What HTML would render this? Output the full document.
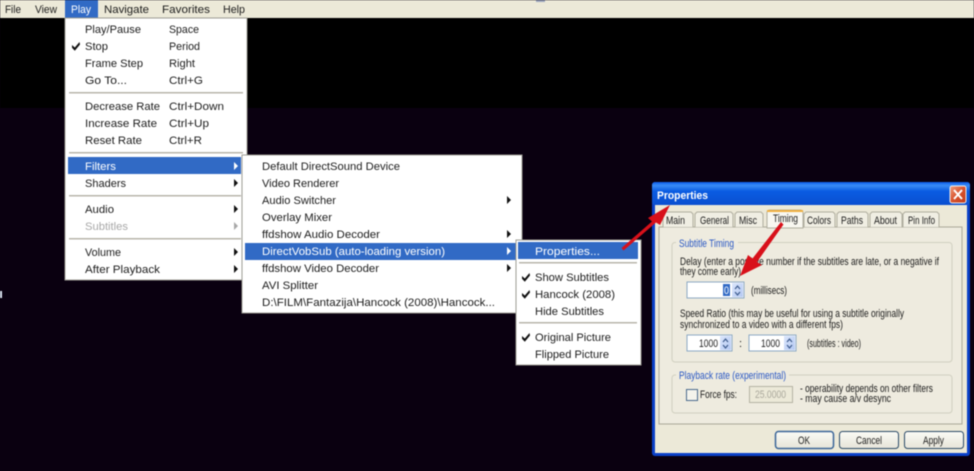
<!DOCTYPE html>
<html><head><meta charset="utf-8"><style>
html,body{margin:0;padding:0;background:#0a0010;width:974px;height:471px;overflow:hidden}
svg{display:block;filter:blur(.45px)}
text{font-family:"Liberation Sans",sans-serif;font-size:11px;fill:#1c1c1c;}
.w{fill:#fff}.g{fill:#a8a8a8}.b{fill:#2a58c4}
</style></head><body>
<svg width="974" height="471" viewBox="0 0 974 471" xmlns="http://www.w3.org/2000/svg">
<defs>
<linearGradient id="tb" x1="0" y1="0" x2="0" y2="1"><stop offset="0" stop-color="#0a5ae8"/><stop offset=".15" stop-color="#3a8cf6"/><stop offset=".4" stop-color="#0a5ce2"/><stop offset="1" stop-color="#0a4fd0"/></linearGradient>
<linearGradient id="btn" x1="0" y1="0" x2="0" y2="1"><stop offset="0" stop-color="#fbfbf6"/><stop offset="1" stop-color="#e6e4d8"/></linearGradient>
<linearGradient id="spin" x1="0" y1="0" x2="1" y2="1"><stop offset="0" stop-color="#dbe6fb"/><stop offset="1" stop-color="#b4c8f2"/></linearGradient>
<linearGradient id="cl" x1="0" y1="0" x2="1" y2="1"><stop offset="0" stop-color="#f0a080"/><stop offset=".5" stop-color="#d8522c"/><stop offset="1" stop-color="#c03a18"/></linearGradient>
<path id="ck" d="M0 3 L2.800 5.500 L7.500 0 L8 2.500 L2.800 8.800 L0 5.800Z"/>
</defs>
<rect width="974" height="471" fill="#0a0010"/>
<rect y="18" width="974" height="90" fill="#000"/>
<rect width="974" height="18" fill="#ece9d8"/>
<rect x="536" y="0" width="9" height="2" fill="#9aa4bc"/>
<rect x="0" y="291" width="2" height="7" fill="#dfe8f5"/>
<rect x="65" y="0" width="33" height="18" fill="#316ac5"/>
<g>
<text x="5" y="13" textLength="16" lengthAdjust="spacingAndGlyphs">File</text>
<text x="35" y="13" textLength="22" lengthAdjust="spacingAndGlyphs">View</text>
<text x="71" y="13" textLength="20" lengthAdjust="spacingAndGlyphs" class="w">Play</text>
<text x="104" y="13" textLength="45" lengthAdjust="spacingAndGlyphs">Navigate</text>
<text x="162" y="13" textLength="48" lengthAdjust="spacingAndGlyphs">Favorites</text>
<text x="223" y="13" textLength="22" lengthAdjust="spacingAndGlyphs">Help</text>
</g>

<!-- Play menu -->
<rect x="65" y="18" width="182" height="262" fill="#fff" stroke="#9d9c94"/>
<rect x="68" y="157" width="173" height="17" fill="#316ac5"/>
<g fill="#b8b6ab"><rect x="69" y="92" width="174" height="1.500"/><rect x="69" y="152" width="174" height="1.500"/><rect x="69" y="195" width="172" height="1.500"/><rect x="69" y="238" width="172" height="1.500"/></g>
<use href="#ck" x="72" y="42" fill="#111"/>
<text x="85" y="33" textLength="56" lengthAdjust="spacingAndGlyphs">Play/Pause</text>
<text x="85" y="50" textLength="23" lengthAdjust="spacingAndGlyphs">Stop</text>
<text x="85" y="67" textLength="58" lengthAdjust="spacingAndGlyphs">Frame Step</text>
<text x="85" y="84" textLength="42" lengthAdjust="spacingAndGlyphs">Go To...</text>
<text x="85" y="110" textLength="75" lengthAdjust="spacingAndGlyphs">Decrease Rate</text>
<text x="85" y="127" textLength="72" lengthAdjust="spacingAndGlyphs">Increase Rate</text>
<text x="85" y="144" textLength="57" lengthAdjust="spacingAndGlyphs">Reset Rate</text>
<text x="169" y="33" textLength="30" lengthAdjust="spacingAndGlyphs">Space</text>
<text x="169" y="50" textLength="31" lengthAdjust="spacingAndGlyphs">Period</text>
<text x="169" y="67" textLength="26" lengthAdjust="spacingAndGlyphs">Right</text>
<text x="169" y="84" textLength="34" lengthAdjust="spacingAndGlyphs">Ctrl+G</text>
<text x="169" y="110" textLength="55" lengthAdjust="spacingAndGlyphs">Ctrl+Down</text>
<text x="169" y="127" textLength="40" lengthAdjust="spacingAndGlyphs">Ctrl+Up</text>
<text x="169" y="144" textLength="33" lengthAdjust="spacingAndGlyphs">Ctrl+R</text>
<text x="85" y="170" textLength="31" lengthAdjust="spacingAndGlyphs" class="w">Filters</text>
<text x="85" y="187" textLength="41" lengthAdjust="spacingAndGlyphs">Shaders</text>
<text x="85" y="213" textLength="29" lengthAdjust="spacingAndGlyphs">Audio</text>
<text x="85" y="230" textLength="43" lengthAdjust="spacingAndGlyphs" class="g">Subtitles</text>
<text x="85" y="256" textLength="36" lengthAdjust="spacingAndGlyphs">Volume</text>
<text x="85" y="273" textLength="75" lengthAdjust="spacingAndGlyphs">After Playback</text>
<g fill="#111"><path d="M234 162l4 4-4 4z" fill="#fff"/><path d="M234 179l4 4-4 4z"/><path d="M234 205l4 4-4 4z"/><path d="M234 222l4 4-4 4z" fill="#a8a8a8"/><path d="M234 248l4 4-4 4z"/><path d="M234 265l4 4-4 4z"/></g>

<!-- Filters submenu -->
<rect x="242" y="155" width="280" height="158" fill="#fff" stroke="#9d9c94"/>
<rect x="245" y="243" width="271" height="17" fill="#316ac5"/>
<text x="262" y="170" textLength="138" lengthAdjust="spacingAndGlyphs">Default DirectSound Device</text>
<text x="262" y="187" textLength="77" lengthAdjust="spacingAndGlyphs">Video Renderer</text>
<text x="262" y="204" textLength="74" lengthAdjust="spacingAndGlyphs">Audio Switcher</text>
<text x="262" y="221" textLength="70" lengthAdjust="spacingAndGlyphs">Overlay Mixer</text>
<text x="262" y="238" textLength="118" lengthAdjust="spacingAndGlyphs">ffdshow Audio Decoder</text>
<text x="262" y="255" textLength="183" lengthAdjust="spacingAndGlyphs" class="w">DirectVobSub (auto-loading version)</text>
<text x="262" y="272" textLength="117" lengthAdjust="spacingAndGlyphs">ffdshow Video Decoder</text>
<text x="262" y="289" textLength="56" lengthAdjust="spacingAndGlyphs">AVI Splitter</text>
<text x="262" y="306" textLength="233" lengthAdjust="spacingAndGlyphs">D:\FILM\Fantazija\Hancock (2008)\Hancock...</text>
<g fill="#111"><path d="M507 196l4 4-4 4z"/><path d="M507 230l4 4-4 4z"/><path d="M507 247l4 4-4 4z" fill="#fff"/><path d="M507 264l4 4-4 4z"/></g>

<!-- DirectVobSub submenu -->
<rect x="516" y="240" width="125" height="125" fill="#fff" stroke="#9d9c94"/>
<rect x="518" y="242" width="120" height="17" fill="#316ac5"/>
<g fill="#b8b6ab"><rect x="519" y="262" width="118" height="1.500"/><rect x="519" y="322" width="118" height="1.500"/></g>
<text x="535" y="255" textLength="65" lengthAdjust="spacingAndGlyphs" class="w">Properties...</text>
<text x="535" y="281" textLength="74" lengthAdjust="spacingAndGlyphs">Show Subtitles</text>
<text x="535" y="298" textLength="80" lengthAdjust="spacingAndGlyphs">Hancock (2008)</text>
<text x="535" y="315" textLength="69" lengthAdjust="spacingAndGlyphs">Hide Subtitles</text>
<text x="535" y="341" textLength="76" lengthAdjust="spacingAndGlyphs">Original Picture</text>
<text x="535" y="358" textLength="74" lengthAdjust="spacingAndGlyphs">Flipped Picture</text>
<use href="#ck" x="522" y="273" fill="#111"/>
<use href="#ck" x="522" y="290" fill="#111"/>
<use href="#ck" x="522" y="333" fill="#111"/>

<!-- Dialog -->
<rect x="652" y="182" width="318" height="274" rx="3" fill="#0a40c8"/>
<rect x="652" y="182" width="318" height="23" rx="3" fill="url(#tb)"/>
<rect x="655" y="205" width="312" height="248" fill="#ece9d8"/>
<text x="657" y="199" textLength="51" lengthAdjust="spacingAndGlyphs" class="w" style="font-weight:bold">Properties</text>
<rect x="950" y="186" width="16" height="17" rx="2" fill="url(#cl)" stroke="#eee"/>
<path d="M954 190l8 9M962 190l-8 9" stroke="#fff" stroke-width="2"/>

<!-- tab panel -->
<rect x="659" y="227" width="303" height="197" fill="#eeebdf" stroke="#a9a798"/>
<g fill="#f0eee3" stroke="#b0ae9f">
<path d="M663 227v-13l2-2h26l2 2v13"/>
<path d="M695 227v-13l2-2h34l2 2v13"/>
<path d="M735 227v-13l2-2h24l2 2v13"/>
<path d="M804 227v-13l2-2h27l2 2v13"/>
<path d="M837 227v-13l2-2h27l2 2v13"/>
<path d="M870 227v-13l2-2h28l2 2v13"/>
<path d="M903 227v-13l2-2h32l2 2v13"/>
</g>
<path d="M767 228v-16l2-2h32l2 2v16z" fill="#f8f7f0" stroke="#b0ae9f"/>
<rect x="767" y="210" width="36" height="2" fill="#f0b040"/>
<text x="666" y="224" textLength="19" lengthAdjust="spacingAndGlyphs">Main</text>
<text x="700" y="224" textLength="29" lengthAdjust="spacingAndGlyphs">General</text>
<text x="739" y="224" textLength="18" lengthAdjust="spacingAndGlyphs">Misc</text>
<text x="773" y="222" textLength="25" lengthAdjust="spacingAndGlyphs">Timing</text>
<text x="807" y="224" textLength="24" lengthAdjust="spacingAndGlyphs">Colors</text>
<text x="841" y="224" textLength="22" lengthAdjust="spacingAndGlyphs">Paths</text>
<text x="874" y="224" textLength="23" lengthAdjust="spacingAndGlyphs">About</text>
<text x="908" y="224" textLength="27" lengthAdjust="spacingAndGlyphs">Pin Info</text>

<!-- group boxes -->
<rect x="672" y="242.500" width="280" height="119.500" rx="3" fill="none" stroke="#d0cfc0"/>
<rect x="676" y="238" width="62" height="10" fill="#eeebdf"/>
<text x="679" y="247" textLength="55" lengthAdjust="spacingAndGlyphs" class="b">Subtitle Timing</text>
<text x="680" y="265" textLength="259" lengthAdjust="spacingAndGlyphs">Delay (enter a positive number if the subtitles are late, or a negative if</text>
<text x="680" y="275" textLength="61" lengthAdjust="spacingAndGlyphs">they come early)</text>
<rect x="687" y="282" width="57" height="16" fill="#fff" stroke="#8ca8c4"/>
<rect x="723" y="284" width="7" height="12" fill="#316ac5"/>
<text x="724" y="294" textLength="5" lengthAdjust="spacingAndGlyphs" class="w">0</text>
<rect x="732" y="283" width="11" height="14" fill="url(#spin)"/>
<path d="M735 289l2.500-3 2.500 3M735 292l2.500 3 2.500-3" fill="none" stroke="#3c5a8c" stroke-width="1.200"/>
<text x="751" y="294" textLength="36" lengthAdjust="spacingAndGlyphs">(millisecs)</text>
<text x="680" y="317" textLength="224" lengthAdjust="spacingAndGlyphs">Speed Ratio (this may be useful for using a subtitle originally</text>
<text x="680" y="328" textLength="163" lengthAdjust="spacingAndGlyphs">synchronized to a video with a different fps)</text>
<rect x="687" y="335" width="45" height="16" fill="#fff" stroke="#8ca8c4"/>
<text x="699" y="347" textLength="19" lengthAdjust="spacingAndGlyphs">1000</text>
<rect x="720" y="336" width="11" height="14" fill="url(#spin)"/>
<path d="M723 342l2.500-3 2.500 3M723 345l2.500 3 2.500-3" fill="none" stroke="#3c5a8c" stroke-width="1.200"/>
<text x="739" y="347">:</text>
<rect x="749" y="335" width="47" height="16" fill="#fff" stroke="#8ca8c4"/>
<text x="761" y="347" textLength="19" lengthAdjust="spacingAndGlyphs">1000</text>
<rect x="784" y="336" width="11" height="14" fill="url(#spin)"/>
<path d="M787 342l2.500-3 2.500 3M787 345l2.500 3 2.500-3" fill="none" stroke="#3c5a8c" stroke-width="1.200"/>
<text x="807" y="347" textLength="54" lengthAdjust="spacingAndGlyphs">(subtitles : video)</text>

<rect x="672" y="375" width="280" height="38" rx="3" fill="none" stroke="#d0cfc0"/>
<rect x="676" y="370" width="113" height="10" fill="#eeebdf"/>
<text x="679" y="379" textLength="107" lengthAdjust="spacingAndGlyphs" class="b">Playback rate (experimental)</text>
<rect x="686.500" y="389.500" width="11" height="11" fill="#f4f3ec" stroke="#4a6a8c"/>
<text x="700" y="398" textLength="37" lengthAdjust="spacingAndGlyphs">Force fps:</text>
<rect x="749.500" y="386.500" width="43" height="16" fill="#ece9d8" stroke="#b5b3a4"/>
<text x="755" y="398" textLength="31" lengthAdjust="spacingAndGlyphs" style="fill:#aaa89c">25.0000</text>
<text x="800" y="392" textLength="133" lengthAdjust="spacingAndGlyphs">- operability depends on other filters</text>
<text x="800" y="402" textLength="91" lengthAdjust="spacingAndGlyphs">- may cause a/v desync</text>

<!-- buttons -->
<rect x="775.500" y="431.500" width="58" height="17" rx="3" fill="url(#btn)" stroke="#3a6598" stroke-width="1.500"/>
<rect x="839.500" y="431.500" width="59" height="17" rx="3" fill="url(#btn)" stroke="#2a4a68"/>
<rect x="904.500" y="431.500" width="59" height="17" rx="3" fill="url(#btn)" stroke="#2a4a68"/>
<text x="798" y="444" textLength="12" lengthAdjust="spacingAndGlyphs">OK</text>
<text x="856" y="444" textLength="26" lengthAdjust="spacingAndGlyphs">Cancel</text>
<text x="923" y="444" textLength="21" lengthAdjust="spacingAndGlyphs">Apply</text>

<!-- red arrows -->
<g fill="#d8101a">
<path d="M621.500 248 L652 221.500 L648 218 L670 205 L660 225 L656 222.500 L623.500 250.500Z"/>
<path d="M781 222 L783.500 224.500 L757 262 L762 265 L740 276 L748 255 L752.500 258.500Z"/>
</g>
</svg>
</body></html>
